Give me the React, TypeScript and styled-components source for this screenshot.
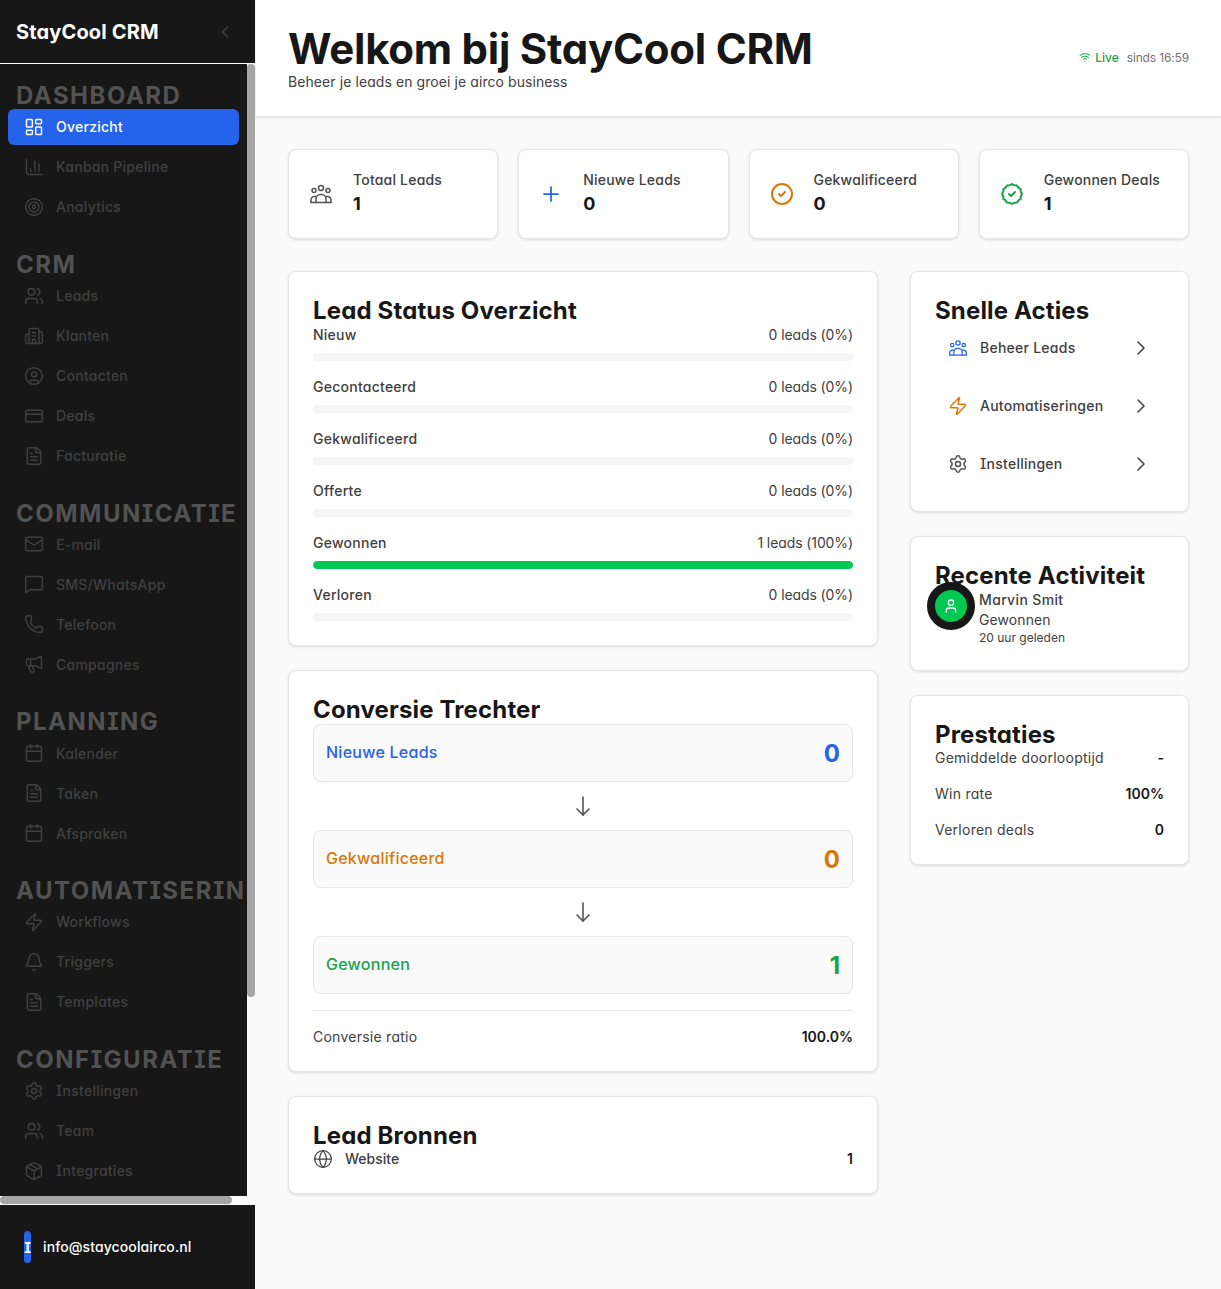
import styled, { createGlobalStyle } from "styled-components";
import type { ReactNode } from "react";
import {
  Bell,
  Building2,
  Calendar,
  ChartColumn,
  ChevronLeft,
  ChevronRight,
  CircleCheck,
  CircleUser,
  CreditCard,
  FileText,
  Globe,
  LayoutDashboard,
  Mail,
  Megaphone,
  MessageSquare,
  Package,
  Phone,
  Plus,
  Settings,
  Target,
  User,
  Users,
  Wifi,
  Zap
} from "lucide-react";

const font = `Inter, "Liberation Sans", sans-serif`;

const GlobalStyle = createGlobalStyle`
  html, body { margin: 0; padding: 0; height: 100%; background: #fafafa; }
  #root { height: 100%; }
  * { box-sizing: border-box; }
  body { font-family: ${font}; font-feature-settings: "cv08", "cv11"; color: #171717; }
`;

const Shell = styled.div`
  display: flex;
  height: 1289px;
  overflow: hidden;
`;

const Sidebar = styled.aside`
  width: 256px;
  flex: none;
  display: flex;
  flex-direction: column;
  background: #171717;
  border-right: 1px solid #fafafa;
`;

const Brand = styled.div`
  height: 64px;
  flex: none;
  display: flex;
  align-items: center;
  justify-content: space-between;
  padding: 0 20px 0 16px;
  border-bottom: 1px solid #fafafa;
  color: #404040;
`;

const BrandName = styled.span`
  font-size: 20px;
  font-weight: 700;
  color: #fff;
  letter-spacing: 0.15px;
`;

// the screenshot shows classic scrollbars, the headless browser hides real ones
const NavArea = styled.div`
  flex: 1;
  min-height: 0;
  display: grid;
  grid-template-columns: 247px 8px;
  grid-template-rows: 1fr 8px;
  background: #fafafa;
`;

const NavViewport = styled.nav`
  min-height: 0;
  overflow: hidden;
  background: #171717;
`;

const VerticalTrack = styled.div`
  min-height: 0;
  background: #fafafa;
`;

const VerticalThumb = styled.div`
  height: 82.4%;
  border-radius: 4px;
  background: #a6a6a6;
`;

const HorizontalTrack = styled.div`
  background: #fafafa;
`;

const HorizontalThumb = styled.div`
  width: 93.9%;
  height: 100%;
  border-radius: 4px;
  background: #a6a6a6;
`;

const ScrollCorner = styled.div`
  background: #fafafa;
`;

const NavInner = styled.div`
  width: 263px;
  padding: 16px 8px;
`;

const Section = styled.section`
  margin-bottom: 24px;
`;

const SectionTitle = styled.h3`
  margin: 0;
  height: 28.8px;
  padding-left: 8px;
  font-size: 24px;
  line-height: 31px;
  font-weight: 700;
  letter-spacing: 1.5px;
  white-space: nowrap;
  color: #525252;
`;

const NavList = styled.div`
  width: 231px;
  display: flex;
  flex-direction: column;
  gap: 4px;
`;

const NavItem = styled.a<{ $active?: boolean }>`
  height: 36px;
  display: flex;
  align-items: center;
  gap: 12px;
  padding-left: 16px;
  border-radius: 6px;
  font-size: 14px;
  font-weight: 500;
  letter-spacing: 0.25px;
  background: ${(p) => (p.$active ? "#2563eb" : "transparent")};
  color: ${(p) => (p.$active ? "#fff" : "#404040")};
`;

const Footer = styled.div`
  height: 85px;
  flex: none;
  display: flex;
  align-items: center;
  gap: 12px;
  padding: 0 24px;
  border-top: 1px solid #fafafa;
  background: #171717;
`;

const FooterAvatar = styled.div`
  width: 7px;
  height: 32px;
  border-radius: 4px;
  background: #2563eb;
  color: #fff;
  font-size: 14px;
  font-weight: 700;
  display: flex;
  align-items: center;
  justify-content: center;
`;

const FooterMail = styled.span`
  margin-bottom: 2px;
  font-size: 14px;
  font-weight: 500;
  letter-spacing: 0.1px;
  color: #fff;
`;

const Main = styled.main`
  flex: 1;
  min-width: 0;
  display: flex;
  flex-direction: column;
`;

const Header = styled.header`
  height: 117px;
  flex: none;
  display: flex;
  align-items: center;
  justify-content: space-between;
  padding: 0 32px;
  background: #fff;
  border-bottom: 1px solid #e5e5e5;
  box-shadow: 0 1px 2px rgba(0, 0, 0, 0.1);
`;

const PageTitle = styled.h1`
  margin: 0;
  font-size: 42px;
  line-height: 48px;
  font-weight: 700;
  letter-spacing: -0.25px;
  color: #171717;
`;

const PageSubtitle = styled.p`
  margin: 0;
  font-size: 14px;
  line-height: 18px;
  letter-spacing: 0.08px;
  color: #404040;
`;

const LiveWrap = styled.div`
  display: flex;
  align-items: center;
  gap: 8px;
  margin-bottom: 2px;
  font-size: 12px;
  color: #737373;
`;

const LiveBadge = styled.span`
  display: flex;
  align-items: center;
  gap: 4px;
  font-weight: 500;
  color: #16a34a;
`;

const SinceText = styled.span`
  letter-spacing: -0.15px;
`;

const Content = styled.div`
  padding: 32px;
  display: flex;
  flex-direction: column;
  gap: 32px;
`;

const StatGrid = styled.div`
  display: grid;
  grid-template-columns: repeat(4, 1fr);
  gap: 20px;
`;

const Card = styled.div`
  background: #fff;
  border: 1px solid #e5e5e5;
  border-radius: 8px;
  box-shadow: 0 1px 3px rgba(0, 0, 0, 0.12);
  padding: 24px;
`;

const StatCard = styled(Card)`
  height: 90px;
  padding: 0 20px;
  display: flex;
  align-items: center;
  gap: 20px;
`;

const IconBox = styled.span<{ $color?: string }>`
  display: flex;
  flex: none;
  color: ${(p) => p.$color ?? "#525252"};
`;

const StatLabel = styled.div`
  font-size: 14px;
  font-weight: 500;
  line-height: 20px;
  letter-spacing: 0.2px;
  color: #404040;
`;

const StatValue = styled.div`
  font-size: 18px;
  font-weight: 700;
  line-height: 28px;
  color: #171717;
`;

const Columns = styled.div`
  display: grid;
  grid-template-columns: 590px 279px;
  gap: 32px;
  align-items: start;
`;

const Stack = styled.div`
  display: flex;
  flex-direction: column;
  gap: 24px;
`;

const CardTitle = styled.h2`
  margin: 0;
  height: 28.8px;
  font-size: 24px;
  line-height: 30px;
  font-weight: 700;
  letter-spacing: 0.15px;
  color: #171717;
`;

const StatusList = styled.div`
  display: flex;
  flex-direction: column;
  gap: 16px;
`;

const RowBetween = styled.div`
  display: flex;
  align-items: center;
  justify-content: space-between;
  font-size: 14px;
  line-height: 20px;
  color: #404040;
`;

const RowLabel = styled.span<{ $weight?: number }>`
  font-weight: ${(p) => p.$weight ?? 400};
  letter-spacing: 0.25px;
`;

const RowValue = styled.span`
  letter-spacing: -0.1px;
`;

const Track = styled.div`
  height: 8px;
  margin-top: 8px;
  border-radius: 4px;
  background: #f5f5f5;
  overflow: hidden;
`;

const Fill = styled.div`
  height: 100%;
  border-radius: 4px;
  background: #00c853;
`;

const FunnelBox = styled.div`
  height: 58px;
  padding: 0 12px;
  display: flex;
  align-items: center;
  justify-content: space-between;
  background: #fafafa;
  border: 1px solid #e5e5e5;
  border-radius: 8px;
`;

const FunnelLabel = styled.span<{ $color: string }>`
  margin-bottom: 2px;
  font-size: 16px;
  font-weight: 500;
  letter-spacing: 0.25px;
  color: ${(p) => p.$color};
`;

const FunnelValue = styled.span<{ $color: string }>`
  margin-top: 2px;
  font-size: 24px;
  font-weight: 700;
  color: ${(p) => p.$color};
`;

const FunnelArrow = styled.div`
  height: 48px;
  display: flex;
  align-items: center;
  justify-content: center;
  color: #525252;
`;

const Divider = styled.div`
  height: 1px;
  margin: 16px 0;
  background: #e5e5e5;
`;

const Strong = styled.span`
  font-weight: 600;
  color: #171717;
`;

const SourceLabel = styled.span`
  display: flex;
  align-items: center;
  gap: 12px;
  font-weight: 500;
  color: #404040;
`;

const ActionList = styled.div`
  display: flex;
  flex-direction: column;
  gap: 12px;
`;

const ActionItem = styled.button`
  all: unset;
  height: 46px;
  display: flex;
  align-items: center;
  justify-content: space-between;
  padding: 0 11px 0 13px;
  font-size: 14px;
  font-weight: 500;
  letter-spacing: 0.25px;
  color: #404040;
`;

const ActionLead = styled.span`
  display: flex;
  align-items: center;
  gap: 12px;
`;

const ActivityRow = styled.div`
  display: flex;
  gap: 4px;
  align-items: flex-start;
`;

const Avatar = styled.div`
  width: 48px;
  height: 48px;
  flex: none;
  margin: -8px 0 0 -8px;
  border: 8px solid #171717;
  border-radius: 50%;
  background: #00c853;
  color: #fff;
  display: flex;
  align-items: center;
  justify-content: center;
`;

const ActivityName = styled.div`
  font-size: 14px;
  line-height: 20px;
  font-weight: 500;
  letter-spacing: 0.35px;
  color: #404040;
`;

const ActivityStatus = styled.div`
  font-size: 14px;
  line-height: 20px;
  letter-spacing: 0.1px;
  color: #404040;
`;

const ActivityTime = styled.div`
  font-size: 12px;
  line-height: 16px;
  color: #404040;
`;

const PerfList = styled.div`
  display: flex;
  flex-direction: column;
  gap: 16px;
`;

function GroupIcon({ size }: { size: number }) {
  return (
    <svg width={size} height={size} viewBox="0 0 24 24" fill="none" stroke="currentColor" strokeWidth="1.5" strokeLinecap="round" strokeLinejoin="round">
      <circle cx="12" cy="6" r="2.5" />
      <circle cx="5" cy="8.5" r="2" />
      <circle cx="19" cy="8.5" r="2" />
      <path d="M2 20.5h20" />
      <path d="M2 20.5V18a3.5 3.5 0 0 1 3.5-3.5H7" />
      <path d="M22 20.5V18a3.5 3.5 0 0 0-3.5-3.5H17" />
      <path d="M7 20.5V17a4.5 4.5 0 0 1 4.5-4.5h1A4.5 4.5 0 0 1 17 17v3.5" />
    </svg>
  );
}

// long shaft, the lucide arrow is too short here
function LongArrowDown() {
  return (
    <svg width="24" height="24" viewBox="0 0 24 24" fill="none" stroke="currentColor" strokeWidth="1.6" strokeLinecap="round" strokeLinejoin="round">
      <path d="M12 3v18" />
      <path d="m6 15 6 6 6-6" />
    </svg>
  );
}

// the green badge is almost a circle, with shallow scallops
const rosette = Array.from({ length: 24 }, (_, i) => {
  const r = i % 2 === 0 ? 9.9 : 9.1;
  const a = (i * Math.PI) / 12;
  return `${(12 + r * Math.cos(a)).toFixed(2)},${(12 + r * Math.sin(a)).toFixed(2)}`;
}).join(" ");

function RosetteCheck({ size }: { size: number }) {
  return (
    <svg width={size} height={size} viewBox="0 0 24 24" fill="none" stroke="currentColor" strokeWidth="2" strokeLinecap="round" strokeLinejoin="round">
      <polygon points={rosette} />
      <path d="m9 12 2 2 4-4" />
    </svg>
  );
}

type NavEntry = { label: string; icon: ReactNode; active?: boolean };

const ic = { size: 20, strokeWidth: 1.75 };

const navSections: { title: string; items: NavEntry[] }[] = [
  {
    title: "DASHBOARD",
    items: [
      { label: "Overzicht", icon: <LayoutDashboard {...ic} />, active: true },
      { label: "Kanban Pipeline", icon: <ChartColumn {...ic} /> },
      { label: "Analytics", icon: <Target {...ic} /> }
    ]
  },
  {
    title: "CRM",
    items: [
      { label: "Leads", icon: <Users {...ic} /> },
      { label: "Klanten", icon: <Building2 {...ic} /> },
      { label: "Contacten", icon: <CircleUser {...ic} /> },
      { label: "Deals", icon: <CreditCard {...ic} /> },
      { label: "Facturatie", icon: <FileText {...ic} /> }
    ]
  },
  {
    title: "COMMUNICATIE",
    items: [
      { label: "E-mail", icon: <Mail {...ic} /> },
      { label: "SMS/WhatsApp", icon: <MessageSquare {...ic} /> },
      { label: "Telefoon", icon: <Phone {...ic} /> },
      { label: "Campagnes", icon: <Megaphone {...ic} /> }
    ]
  },
  {
    title: "PLANNING",
    items: [
      { label: "Kalender", icon: <Calendar {...ic} /> },
      { label: "Taken", icon: <FileText {...ic} /> },
      { label: "Afspraken", icon: <Calendar {...ic} /> }
    ]
  },
  {
    title: "AUTOMATISERING",
    items: [
      { label: "Workflows", icon: <Zap {...ic} /> },
      { label: "Triggers", icon: <Bell {...ic} /> },
      { label: "Templates", icon: <FileText {...ic} /> }
    ]
  },
  {
    title: "CONFIGURATIE",
    items: [
      { label: "Instellingen", icon: <Settings {...ic} /> },
      { label: "Team", icon: <Users {...ic} /> },
      { label: "Integraties", icon: <Package {...ic} /> }
    ]
  }
];

const statuses = [
  { label: "Nieuw", value: "0 leads (0%)", pct: 0 },
  { label: "Gecontacteerd", value: "0 leads (0%)", pct: 0 },
  { label: "Gekwalificeerd", value: "0 leads (0%)", pct: 0 },
  { label: "Offerte", value: "0 leads (0%)", pct: 0 },
  { label: "Gewonnen", value: "1 leads (100%)", pct: 100 },
  { label: "Verloren", value: "0 leads (0%)", pct: 0 }
];

const stats = [
  { label: "Totaal Leads", value: "1", color: "#525252", icon: <GroupIcon size={24} /> },
  { label: "Nieuwe Leads", value: "0", color: "#2563eb", icon: <Plus size={24} strokeWidth={1.75} /> },
  { label: "Gekwalificeerd", value: "0", color: "#d97706", icon: <CircleCheck size={24} strokeWidth={2} /> },
  { label: "Gewonnen Deals", value: "1", color: "#16a34a", icon: <RosetteCheck size={24} /> }
];

const funnel = [
  { label: "Nieuwe Leads", value: "0", color: "#2563eb" },
  { label: "Gekwalificeerd", value: "0", color: "#d97706" },
  { label: "Gewonnen", value: "1", color: "#16a34a" }
];

const actions = [
  { label: "Beheer Leads", color: "#2563eb", icon: <GroupIcon size={20} /> },
  { label: "Automatiseringen", color: "#d97706", icon: <Zap size={20} strokeWidth={1.75} /> },
  { label: "Instellingen", color: "#525252", icon: <Settings size={20} strokeWidth={1.75} /> }
];

const performance = [
  { label: "Gemiddelde doorlooptijd", value: "-" },
  { label: "Win rate", value: "100%" },
  { label: "Verloren deals", value: "0" }
];

export default function App() {
  return (
    <Shell>
      <GlobalStyle />
      <Sidebar>
        <Brand>
          <BrandName>StayCool CRM</BrandName>
          <ChevronLeft size={20} strokeWidth={1.75} />
        </Brand>
        <NavArea>
          <NavViewport>
            <NavInner>
              {navSections.map((section) => (
                <Section key={section.title}>
                  <SectionTitle>{section.title}</SectionTitle>
                  <NavList>
                    {section.items.map((item) => (
                      <NavItem key={item.label} $active={item.active}>
                        {item.icon}
                        {item.label}
                      </NavItem>
                    ))}
                  </NavList>
                </Section>
              ))}
            </NavInner>
          </NavViewport>
          <VerticalTrack>
            <VerticalThumb />
          </VerticalTrack>
          <HorizontalTrack>
            <HorizontalThumb />
          </HorizontalTrack>
          <ScrollCorner />
        </NavArea>
        <Footer>
          <FooterAvatar>I</FooterAvatar>
          <FooterMail>info@staycoolairco.nl</FooterMail>
        </Footer>
      </Sidebar>
      <Main>
        <Header>
          <div>
            <PageTitle>Welkom bij StayCool CRM</PageTitle>
            <PageSubtitle>Beheer je leads en groei je airco business</PageSubtitle>
          </div>
          <LiveWrap>
            <LiveBadge>
              <Wifi size={12} />
              Live
            </LiveBadge>
            <SinceText>sinds 16:59</SinceText>
          </LiveWrap>
        </Header>
        <Content>
          <StatGrid>
            {stats.map((s) => (
              <StatCard key={s.label}>
                <IconBox $color={s.color}>{s.icon}</IconBox>
                <div>
                  <StatLabel>{s.label}</StatLabel>
                  <StatValue>{s.value}</StatValue>
                </div>
              </StatCard>
            ))}
          </StatGrid>
          <Columns>
            <Stack>
              <Card>
                <CardTitle>Lead Status Overzicht</CardTitle>
                <StatusList>
                  {statuses.map((s) => (
                    <div key={s.label}>
                      <RowBetween>
                        <RowLabel $weight={500}>{s.label}</RowLabel>
                        <RowValue>{s.value}</RowValue>
                      </RowBetween>
                      <Track>{s.pct > 0 && <Fill style={{ width: `${s.pct}%` }} />}</Track>
                    </div>
                  ))}
                </StatusList>
              </Card>
              <Card>
                <CardTitle>Conversie Trechter</CardTitle>
                {funnel.map((f, i) => (
                  <div key={f.label}>
                    {i > 0 && (
                      <FunnelArrow>
                        <LongArrowDown />
                      </FunnelArrow>
                    )}
                    <FunnelBox>
                      <FunnelLabel $color={f.color}>{f.label}</FunnelLabel>
                      <FunnelValue $color={f.color}>{f.value}</FunnelValue>
                    </FunnelBox>
                  </div>
                ))}
                <Divider />
                <RowBetween>
                  <RowLabel>Conversie ratio</RowLabel>
                  <Strong>100.0%</Strong>
                </RowBetween>
              </Card>
              <Card>
                <CardTitle>Lead Bronnen</CardTitle>
                <RowBetween>
                  <SourceLabel>
                    <Globe size={20} strokeWidth={1.5} />
                    Website
                  </SourceLabel>
                  <Strong>1</Strong>
                </RowBetween>
              </Card>
            </Stack>
            <Stack>
              <Card>
                <CardTitle>Snelle Acties</CardTitle>
                <ActionList>
                  {actions.map((a) => (
                    <ActionItem key={a.label}>
                      <ActionLead>
                        <IconBox $color={a.color}>{a.icon}</IconBox>
                        {a.label}
                      </ActionLead>
                      <ChevronRight size={24} strokeWidth={1.5} />
                    </ActionItem>
                  ))}
                </ActionList>
              </Card>
              <Card>
                <CardTitle>Recente Activiteit</CardTitle>
                <ActivityRow>
                  <Avatar>
                    <User size={16} />
                  </Avatar>
                  <div>
                    <ActivityName>Marvin Smit</ActivityName>
                    <ActivityStatus>Gewonnen</ActivityStatus>
                    <ActivityTime>20 uur geleden</ActivityTime>
                  </div>
                </ActivityRow>
              </Card>
              <Card>
                <CardTitle>Prestaties</CardTitle>
                <PerfList>
                  {performance.map((p) => (
                    <RowBetween key={p.label}>
                      <RowLabel>{p.label}</RowLabel>
                      <Strong>{p.value}</Strong>
                    </RowBetween>
                  ))}
                </PerfList>
              </Card>
            </Stack>
          </Columns>
        </Content>
      </Main>
    </Shell>
  );
}
